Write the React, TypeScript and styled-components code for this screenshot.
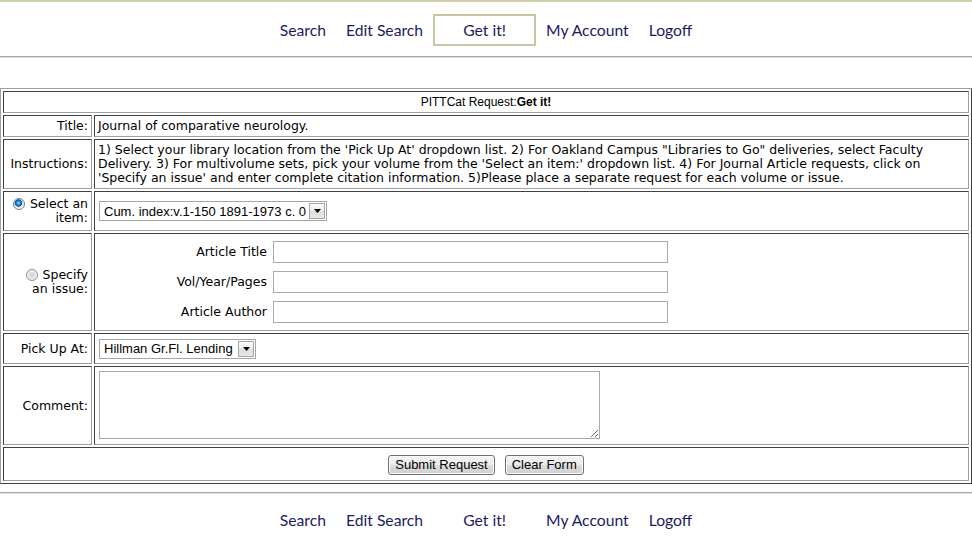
import React from "react";
import styled, { createGlobalStyle } from "styled-components";

const GlobalStyle = createGlobalStyle`
  html, body { margin: 0; padding: 0; background: #fff; }
  body { font-family: "DejaVu Sans", Verdana, sans-serif; color: #000; }
`;

const Page = styled.div`
  border-top: 2px solid #cfcfa8;
`;

const Nav = styled.nav<{ $top: number }>`
  display: flex;
  justify-content: center;
  align-items: center;
  padding: ${(p) => p.$top}px 0 10px;
`;

const NavLink = styled.a<{ $boxed?: boolean; $active?: boolean }>`
  display: flex;
  align-items: center;
  justify-content: center;
  height: 32px;
  box-sizing: border-box;
  padding: 0 10px 1px;
  font-family: Lato, "Open Sans", sans-serif;
  font-size: 15.7px;
  color: #1b1b62;
  text-decoration: none;
  ${(p) =>
    p.$boxed
      ? `width: 103px; border: 2px solid ${p.$active ? "#c9c5a0" : "transparent"};`
      : ""}
`;

const Divider = styled.div<{ $gap: number }>`
  height: 0;
  border-top: 1px solid #a4a4a4;
  border-bottom: 1px solid #e2e2e2;
  margin-bottom: ${(p) => p.$gap}px;
`;

const FormTable = styled.table`
  width: 100%;
  box-sizing: border-box;
  border-collapse: separate;
  border-spacing: 2px;
  border: 1px solid;
  border-color: #a0a0a0 #404040 #404040 #a0a0a0;
  margin: 0 0 8px;
`;

const Cell = styled.td<{ $label?: boolean }>`
  border: 1px solid;
  border-color: #404040 #a0a0a0 #a0a0a0 #404040;
  padding: 3px;
  font-family: "DejaVu Sans", Verdana, sans-serif;
  font-size: 12.5px;
  line-height: 14px;
  vertical-align: middle;
  text-align: ${(p) => (p.$label ? "right" : "left")};
  width: ${(p) => (p.$label ? "81px" : "auto")};
`;

const HeaderCell = styled.td`
  border: 1px solid;
  border-color: #404040 #a0a0a0 #a0a0a0 #404040;
  padding: 3px;
  font-family: "Liberation Sans", Arial, sans-serif;
  font-size: 12px;
  line-height: 14px;
  text-align: center;
`;

const Radio = styled.input.attrs({ type: "radio" })`
  appearance: none;
  -webkit-appearance: none;
  display: inline-block;
  width: 12px;
  height: 12px;
  margin: 0 5px 0 0;
  box-sizing: border-box;
  border-radius: 50%;
  border: 1px solid #8c8c8c;
  vertical-align: -2px;
  background: radial-gradient(circle at 50% 50%, #cfcfcf 0, #e4e4e4 3px, #fbfbfb 5.5px);
  &:checked {
    border-color: #5a7fa4;
    background: radial-gradient(circle at 45% 40%, #a8e4ff 0, #2f8fd4 1.8px, #0f4f90 3.4px, #dcdcdc 3.9px, #f8f8f8 5.5px);
  }
`;

const FieldLine = styled.div<{ $height: number }>`
  display: flex;
  align-items: center;
  height: ${(p) => p.$height}px;
  padding-left: 1px;
`;

const SelectWrap = styled.span<{ $width: number }>`
  position: relative;
  display: inline-block;
  width: ${(p) => p.$width}px;
  height: 20px;
`;

const NativeSelect = styled.select`
  appearance: none;
  -webkit-appearance: none;
  width: 100%;
  height: 100%;
  box-sizing: border-box;
  margin: 0;
  border: 1px solid #a5a5a5;
  border-radius: 0;
  background: #fff;
  padding: 0 20px 0 4px;
  font-family: "Liberation Sans", Arial, sans-serif;
  font-size: 13px;
  color: #000;
  outline: none;
`;

const DropArrow = styled.span`
  position: absolute;
  top: 2px;
  right: 2px;
  width: 16px;
  height: 16px;
  box-sizing: border-box;
  border: 1px solid #a6a6a6;
  background: linear-gradient(#fdfdfd, #ececec 50%, #dcdcdc 51%, #e9e9e9);
  display: flex;
  align-items: center;
  justify-content: center;
  pointer-events: none;
`;

const IssueGrid = styled.div`
  display: grid;
  grid-template-columns: 169px 395px;
  column-gap: 6px;
  row-gap: 8px;
  align-items: center;
  padding: 4px 0;
`;

const IssueLabel = styled.label`
  text-align: right;
`;

const TextInput = styled.input`
  width: 395px;
  height: 22px;
  box-sizing: border-box;
  margin: 0;
  padding: 1px 3px;
  border: 1px solid #a9a9a9;
  font-family: "Liberation Sans", Arial, sans-serif;
  font-size: 13px;
`;

const CommentBox = styled.textarea`
  display: block;
  width: 501px;
  height: 68px;
  box-sizing: border-box;
  margin: 1px 0 2px 1px;
  border: 1px solid #a9a9a9;
  font-family: "Liberation Mono", monospace;
  font-size: 13px;
  resize: both;
`;

const ButtonRow = styled.div`
  display: flex;
  justify-content: center;
  gap: 10px;
  padding: 4px 0 2px;
`;

const Button = styled.button`
  height: 20px;
  margin: 0;
  padding: 0 6px;
  border: 1px solid #707070;
  border-radius: 3px;
  background: linear-gradient(#f3f3f3, #ececec 50%, #dddddd 51%, #d0d0d0);
  box-shadow: inset 0 0 0 1px #fbfbfb;
  font-family: "Liberation Sans", Arial, sans-serif;
  font-size: 13px;
  line-height: 16px;
  color: #000;
`;

const Arrow = () => (
  <svg width="7" height="4" viewBox="0 0 7 4">
    <path d="M0 0h7L3.5 4z" fill="#000" />
  </svg>
);

const Dropdown = ({ width, value }: { width: number; value: string }) => (
  <SelectWrap $width={width}>
    <NativeSelect defaultValue={value}>
      <option>{value}</option>
    </NativeSelect>
    <DropArrow>
      <Arrow />
    </DropArrow>
  </SelectWrap>
);

const navItems = ["Search", "Edit Search", "Get it!", "My Account", "Logoff"];

const NavBar = ({ active, top }: { active: boolean; top: number }) => (
  <Nav $top={top}>
    {navItems.map((item) => (
      <NavLink
        key={item}
        href="#"
        $boxed={item === "Get it!"}
        $active={active && item === "Get it!"}
      >
        {item}
      </NavLink>
    ))}
  </Nav>
);

export default function App() {
  return (
    <Page>
      <GlobalStyle />
      <NavBar active top={12} />
      <Divider $gap={30} />
      <FormTable>
        <tbody>
          <tr>
            <HeaderCell colSpan={2}>
              PITTCat Request:<b>Get it!</b>
            </HeaderCell>
          </tr>
          <tr>
            <Cell $label>Title:</Cell>
            <Cell>Journal of comparative neurology.</Cell>
          </tr>
          <tr>
            <Cell $label>Instructions:</Cell>
            <Cell>
              1) Select your library location from the 'Pick Up At' dropdown list. 2) For
              Oakland Campus "Libraries to Go" deliveries, select Faculty Delivery. 3) For
              multivolume sets, pick your volume from the 'Select an item:' dropdown list. 4)
              For Journal Article requests, click on 'Specify an issue' and enter complete
              citation information. 5)Please place a separate request for each volume or
              issue.
            </Cell>
          </tr>
          <tr>
            <Cell $label>
              <Radio name="mode" defaultChecked />
              Select an
              <br />
              item:
            </Cell>
            <Cell>
              <FieldLine $height={32}>
                <Dropdown width={228} value="Cum. index:v.1-150 1891-1973 c. 0" />
              </FieldLine>
            </Cell>
          </tr>
          <tr>
            <Cell $label>
              <Radio name="mode" />
              Specify
              <br />
              an issue:
            </Cell>
            <Cell>
              <IssueGrid>
                <IssueLabel>Article Title</IssueLabel>
                <TextInput />
                <IssueLabel>Vol/Year/Pages</IssueLabel>
                <TextInput />
                <IssueLabel>Article Author</IssueLabel>
                <TextInput />
              </IssueGrid>
            </Cell>
          </tr>
          <tr>
            <Cell $label>Pick Up At:</Cell>
            <Cell>
              <FieldLine $height={23}>
                <Dropdown width={157} value="Hillman Gr.Fl. Lending" />
              </FieldLine>
            </Cell>
          </tr>
          <tr>
            <Cell $label>Comment:</Cell>
            <Cell>
              <CommentBox />
            </Cell>
          </tr>
          <tr>
            <Cell colSpan={2}>
              <ButtonRow>
                <Button type="button">Submit Request</Button>
                <Button type="button">Clear Form</Button>
              </ButtonRow>
            </Cell>
          </tr>
        </tbody>
      </FormTable>
      <Divider $gap={0} />
      <NavBar active={false} top={10} />
    </Page>
  );
}
